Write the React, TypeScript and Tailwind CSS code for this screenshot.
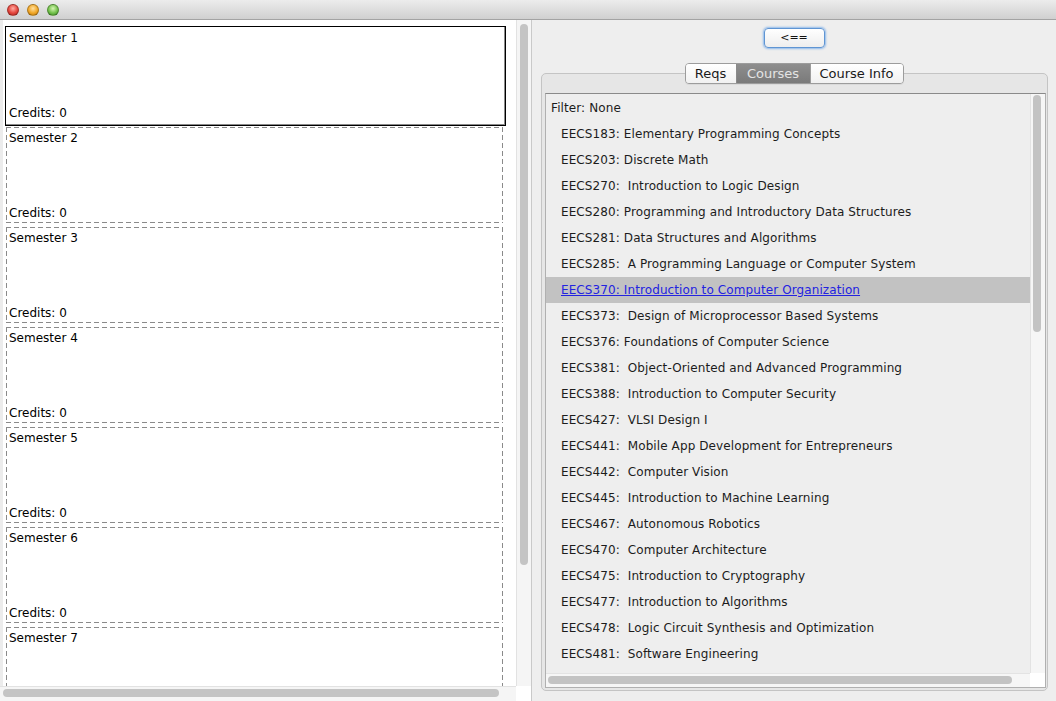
import React from "react";

const courses: string[] = [
  "EECS183: Elementary Programming Concepts",
  "EECS203: Discrete Math",
  "EECS270:  Introduction to Logic Design",
  "EECS280: Programming and Introductory Data Structures",
  "EECS281: Data Structures and Algorithms",
  "EECS285:  A Programming Language or Computer System",
  "EECS370: Introduction to Computer Organization",
  "EECS373:  Design of Microprocessor Based Systems",
  "EECS376: Foundations of Computer Science",
  "EECS381:  Object-Oriented and Advanced Programming",
  "EECS388:  Introduction to Computer Security",
  "EECS427:  VLSI Design I",
  "EECS441:  Mobile App Development for Entrepreneurs",
  "EECS442:  Computer Vision",
  "EECS445:  Introduction to Machine Learning",
  "EECS467:  Autonomous Robotics",
  "EECS470:  Computer Architecture",
  "EECS475:  Introduction to Cryptography",
  "EECS477:  Introduction to Algorithms",
  "EECS478:  Logic Circuit Synthesis and Optimization",
  "EECS481:  Software Engineering",
];

const semesters = [1, 2, 3, 4, 5, 6, 7];

function SemesterFirst({ n }: { n: number }) {
  return (
    <div className="ml-[2px] w-[501px] h-[100px] border border-black shadow-[inset_-1px_-1px_0_#8a8a8a] flex flex-col justify-between pt-[3px] pb-[4px] pl-[3px] text-[12px] leading-[16px] text-black">
      <div>Semester {n}</div>
      <div>Credits: 0</div>
    </div>
  );
}

function SemesterDashed({ n }: { n: number }) {
  return (
    <div className="h-[100px] pt-[1px]">
      <div className="ml-[3px] w-[497px] h-[96px] bg-[repeating-linear-gradient(90deg,#8a8a8a_0_5px,transparent_5px_8px),repeating-linear-gradient(90deg,#8a8a8a_0_5px,transparent_5px_8px),repeating-linear-gradient(180deg,#8a8a8a_0_5px,transparent_5px_8px),repeating-linear-gradient(180deg,#8a8a8a_0_5px,transparent_5px_8px)] bg-[length:100%_1px,100%_1px,1px_100%,1px_100%] bg-[position:0_0,0_100%,0_0,100%_0] bg-no-repeat flex flex-col justify-between pt-[3px] pb-[2px] pl-[3px] text-[12px] leading-[16px] text-black">
        <div>Semester {n}</div>
        <div>Credits: 0</div>
      </div>
    </div>
  );
}

export default function App() {
  return (
    <div className="w-[1056px] h-[701px] flex flex-col bg-[#eeeeee] overflow-hidden font-['DejaVu_Sans',sans-serif]">
      {/* title bar */}
      <div className="h-[20px] shrink-0 border-b border-[#a3a3a3] bg-gradient-to-b from-[#ececec] to-[#d0d0d0] flex items-center gap-[8px] pl-[7px]">
        <div className="w-[12px] h-[12px] rounded-full border border-[#00000040] bg-[radial-gradient(circle_at_50%_35%,#ffaca3_0%,#e5473e_55%,#a9231c_100%)]" />
        <div className="w-[12px] h-[12px] rounded-full border border-[#00000040] bg-[radial-gradient(circle_at_50%_35%,#ffe0a0_0%,#f1a829_55%,#b87409_100%)]" />
        <div className="w-[12px] h-[12px] rounded-full border border-[#00000040] bg-[radial-gradient(circle_at_50%_35%,#d6f5b4_0%,#74c24c_55%,#3a8622_100%)]" />
      </div>

      <div className="flex flex-1 min-h-0">
        {/* left pane */}
        <div className="w-[531px] shrink-0 flex flex-col">
          <div className="flex flex-1 min-h-0">
            <div className="w-[516px] bg-white border-l-[3px] border-[#ececec] overflow-hidden pt-[6px]">
              {semesters.map((n) =>
                n === 1 ? <SemesterFirst key={n} n={n} /> : <SemesterDashed key={n} n={n} />
              )}
            </div>
            <div className="w-[15px] bg-[#f5f5f5] border-l border-[#e2e2e2] pt-[4px] pl-[3px]">
              <div className="w-[8px] h-[541px] rounded-full bg-[#c4c4c4]" />
            </div>
          </div>
          <div className="h-[15px] shrink-0 flex">
            <div className="w-[516px] bg-[#f5f5f5] border-t border-[#e2e2e2] pl-[3px] pt-[2px]">
              <div className="w-[496px] h-[8px] rounded-full bg-[#c4c4c4]" />
            </div>
            <div className="w-[15px] bg-white" />
          </div>
        </div>

        {/* right pane */}
        <div className="flex-1 flex flex-col items-center border-l border-[#c9c9c9] bg-[#eeeeee]">
          <button className="mt-[8px] w-[61px] h-[20px] rounded-[4px] border border-[#5f95d3] shadow-[0_0_2px_1px_#8fb9ea] bg-gradient-to-b from-white to-[#eeeeee] text-[11px] leading-[18px] text-[#111] text-center">
            {"<=="}
          </button>

          <div className="mt-[15px] h-[21px] flex relative z-10 border border-[#9c9c9c] rounded-[4px] overflow-hidden text-[13px] leading-[19px] shadow-[0_1px_0_#dadada]">
            <div className="w-[50px] text-center text-[#1a1a1a] bg-gradient-to-b from-white to-[#f1f1f1]">Reqs</div>
            <div className="w-[74px] text-center text-[#e4e4e4] border-l border-[#8a8a8a] bg-gradient-to-b from-[#8e8e8e] to-[#7a7a7a]">Courses</div>
            <div className="w-[93px] text-center text-[#1a1a1a] border-l border-[#9c9c9c] bg-gradient-to-b from-white to-[#f1f1f1]">Course Info</div>
          </div>

          <div className="self-stretch ml-[9px] mr-[8px] -mt-[11px] mb-[10px] flex-1 min-h-0 flex border border-[#c4c4c4] rounded-[5px] bg-[#e6e6e6] pt-[19px] pl-[3px] pr-[1px] pb-[2px]">
            <div className="flex-1 min-w-0 flex flex-col border border-[#b0b0b0] border-t-[#8a8a8a] bg-[#eeeeee]">
              <div className="flex flex-1 min-h-0">
                <div className="flex-1 min-w-0 overflow-hidden pt-[1px] text-[12px] leading-[26px] tracking-[0.1px] text-[#1c1c1c]">
                  <div className="h-[26px] pl-[5px]">Filter: None</div>
                  {courses.map((c, i) =>
                    i === 6 ? (
                      <div key={c} className="h-[26px] pl-[15px] bg-[#c2c2c2] whitespace-pre">
                        <span className="text-[#2323e0] underline decoration-[#2323e0]">{c}</span>
                      </div>
                    ) : (
                      <div key={c} className="h-[26px] pl-[15px] whitespace-pre">
                        {c}
                      </div>
                    )
                  )}
                </div>
                <div className="w-[15px] bg-[#f6f6f6] border-l border-[#e3e3e3] pt-[1px] pl-[2px]">
                  <div className="w-[8px] h-[237px] rounded-full bg-[#c3c3c3]" />
                </div>
              </div>
              <div className="h-[14px] shrink-0 flex">
                <div className="flex-1 bg-[#f6f6f6] border-t border-[#e3e3e3] pl-[2px] pt-[2px]">
                  <div className="w-[464px] h-[8px] rounded-full bg-[#c3c3c3]" />
                </div>
                <div className="w-[15px] bg-white" />
              </div>
            </div>
          </div>
        </div>
      </div>
    </div>
  );
}
